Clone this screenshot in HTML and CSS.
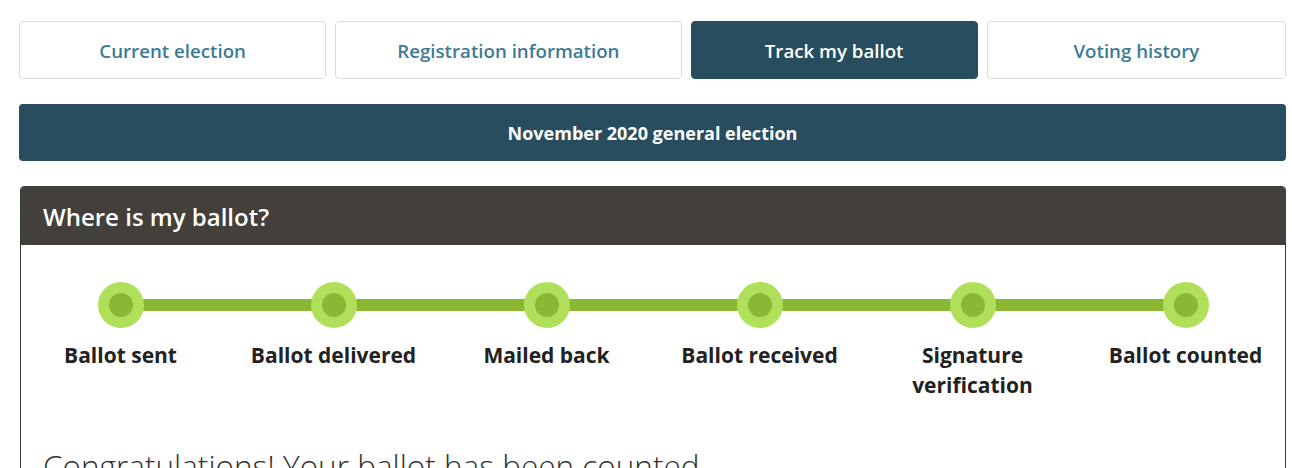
FILE: index.html
```html
<!DOCTYPE html>
<html lang="en">

<head>
  <meta charset="UTF-8">
  <meta name="viewport" content="width=device-width, initial-scale=1.0">
  <title>Track my ballot</title>
  <link rel="stylesheet" href="styles.css">
</head>

<body>

  <nav class="tabs">
    <a class="tab" href="#">Current election</a>
    <a class="tab" href="#">Registration information</a>
    <a class="tab active" href="#">Track my ballot</a>
    <a class="tab" href="#">Voting history</a>
  </nav>

  <div class="election-bar">November 2020 general election</div>

  <section class="card">
    <h2 class="card-header">Where is my ballot?</h2>
    <div class="card-body">
      <ol class="steps">
        <li class="step"><span class="dot"></span><span class="label">Ballot sent</span></li>
        <li class="step"><span class="dot"></span><span class="label">Ballot delivered</span></li>
        <li class="step"><span class="dot"></span><span class="label">Mailed back</span></li>
        <li class="step"><span class="dot"></span><span class="label">Ballot received</span></li>
        <li class="step"><span class="dot"></span><span class="label">Signature verification</span></li>
        <li class="step"><span class="dot"></span><span class="label">Ballot counted</span></li>
      </ol>
      <h3 class="status">Congratulations! Your ballot has been counted.</h3>
    </div>
  </section>

</body>

</html>
```

FILE: styles.css
```css
body {
  font-family: 'Open Sans', 'Liberation Sans', sans-serif;
  margin: 0;
  padding: 21px 6px 0 19px;
  color: #222;
  background: #fff;
}

.tabs {
  display: grid;
  grid-template-columns: 307fr 346fr 287fr 299fr;
  gap: 9px;
}

.tab {
  display: flex;
  align-items: center;
  justify-content: center;
  height: 56px;
  border: 1px solid #dcdcdc;
  border-radius: 4px;
  color: #3b7b97;
  font-size: 18.7px;
  font-weight: 600;
  text-decoration: none;
}

.tab.active {
  background-color: #284d5f;
  border-color: #284d5f;
  color: #fff;
}

.election-bar {
  margin-top: 25px;
  height: 57px;
  display: flex;
  align-items: center;
  justify-content: center;
  background-color: #284d5f;
  border-radius: 4px;
  color: #fff;
  font-size: 18px;
  font-weight: 700;
}

.card {
  margin: 25px 0 0 1px;
  border: 1px solid #3a3a3a;
  border-radius: 4px;
  overflow: hidden;
}

.card-header {
  margin: 0;
  height: 58px;
  padding: 0 22px;
  display: flex;
  align-items: center;
  background-color: #433f3a;
  color: #fff;
  font-size: 24px;
  font-weight: 600;
}

.card-body {
  padding: 37px 22px 40px;
}

.steps {
  list-style: none;
  margin: 0 -29px;
  padding: 0;
  display: grid;
  grid-template-columns: repeat(6, 1fr);
}

.step {
  position: relative;
  display: flex;
  flex-direction: column;
  align-items: center;
  text-align: center;
}

/* connector to the next step */
.step:not(:last-child)::after {
  content: "";
  position: absolute;
  top: 17px;
  left: 50%;
  width: 100%;
  height: 12px;
  background-color: #8ab833;
}

.dot {
  position: relative;
  z-index: 1;
  width: 24px;
  height: 24px;
  border: 11px solid #b0e05a;
  border-radius: 50%;
  background-color: #8ab833;
}

.label {
  margin-top: 12px;
  padding: 0 18px;
  font-size: 21px;
  font-weight: 700;
  line-height: 30px;
  color: #222;
}

.status {
  margin: 44px 0 0;
  font-size: 31.5px;
  font-weight: 300;
  color: #333;
}
```
